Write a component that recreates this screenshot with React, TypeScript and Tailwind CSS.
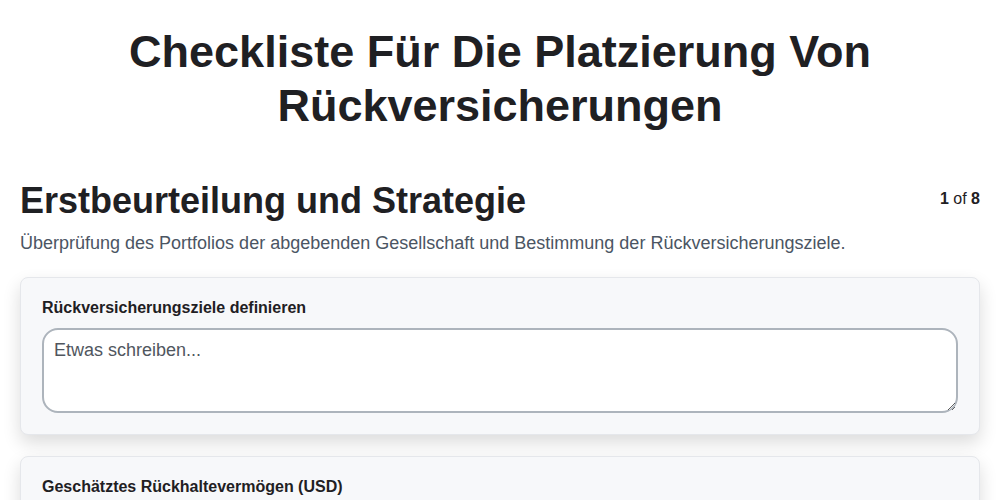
export default function App() {
  return (
    <div className="min-h-screen bg-white text-[#1f2023]" style={{ fontFamily: '"Liberation Sans", Arial, sans-serif' }}>
      <div className="px-5">
        <h1 className="pt-[25px] text-center text-[45px] font-bold leading-[54px]">
          Checkliste Für Die Platzierung Von<br />Rückversicherungen
        </h1>
        <div className="mt-[46px] flex items-start justify-between">
          <h2 className="text-[36px] font-bold leading-[44px]">Erstbeurteilung und Strategie</h2>
          <div className="mt-[8px] text-[16px]"><span className="font-bold">1</span> of <span className="font-bold">8</span></div>
        </div>
        <p className="mt-[7px] text-[18px] leading-[27px] text-[#4b5563]">Überprüfung des Portfolios der abgebenden Gesellschaft und Bestimmung der Rückversicherungsziele.</p>
        <div className="mt-[20px] flex flex-col gap-[21px]">
          <div className="rounded-lg border border-[#e5e7eb] bg-[#f7f8fa] px-[21px] pb-[21px] pt-[20px] shadow-[0_8px_18px_rgba(0,0,0,0.14)]">
            <label className="block text-[16px] font-bold leading-[20px]">Rückversicherungsziele definieren</label>
            <textarea className="mt-[10px] block h-[85px] w-full rounded-2xl border-2 border-[#adb4bc] bg-white px-[10px] py-[7px] text-[18px] leading-[27px] placeholder:text-[#50565e] focus:outline-none" placeholder="Etwas schreiben..." />
          </div>
          <div className="rounded-lg border border-[#e5e7eb] bg-[#f7f8fa] px-[21px] pb-[21px] pt-[20px] shadow-[0_8px_18px_rgba(0,0,0,0.14)]">
            <label className="block text-[16px] font-bold leading-[20px]">Geschätztes Rückhaltevermögen (USD)</label>
            <input className="mt-[11px] block h-[44px] w-full rounded-2xl border-2 border-[#adb4bc] bg-white px-[10px] text-[18px]" />
          </div>
        </div>
      </div>
    </div>
  );
}
